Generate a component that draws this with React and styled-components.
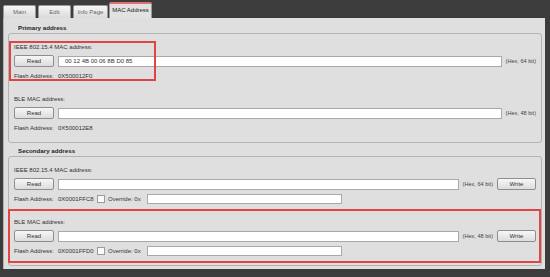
import React from "react";
import styled, { createGlobalStyle } from "styled-components";

const Global = createGlobalStyle`
  html, body { margin: 0; padding: 0; background: #3c3c3c; }
  body { font-family: "Liberation Sans", Arial, sans-serif; }
  #root { width: 550px; height: 277px; }
`;

const Page = styled.div`
  width: 550px;
  height: 277px;
  box-sizing: border-box;
  background: #3c3c3c;
  padding: 2px 5px 8px 3px;
  display: flex;
  flex-direction: column;
`;

const TabBar = styled.div`
  display: flex;
  align-items: flex-end;
  height: 16px;
  gap: 2px;
`;

const Tab = styled.div`
  box-sizing: border-box;
  width: ${(p) => p.$w}px;
  height: ${(p) => (p.$active ? 16 : 13)}px;
  margin-right: ${(p) => p.$mr || 0}px;
  display: flex;
  align-items: center;
  justify-content: center;
  font-size: 6px;
  color: ${(p) => (p.$active ? "#222" : "#666")};
  background: ${(p) =>
    p.$active
      ? "#e2e2e2"
      : "linear-gradient(#f6f6f6, #dadada)"};
  border: 1px solid #9a9a9a;
  border-bottom: none;
  border-top: ${(p) => (p.$active ? "2px solid #e07070" : "1px solid #9a9a9a")};
  border-radius: 2px 2px 0 0;
  padding-bottom: ${(p) => (p.$active ? 2 : 0)}px;
`;

const Panel = styled.div`
  flex: 1;
  background: #dfdfdf;
  border-left: 1px solid #b5b5b5;
  box-sizing: border-box;
  padding: 6px 3px 3px 4px;
  display: flex;
  flex-direction: column;
`;

const SectionTitle = styled.div`
  font-size: 6.2px;
  font-weight: bold;
  color: #222;
  line-height: 8px;
  height: 8px;
  padding-left: 10px;
  margin-top: ${(p) => p.$mt || 0}px;
  margin-bottom: 1px;
`;

const Group = styled.div`
  border: 1px solid #b3b3b3;
  border-radius: 3px;
  box-sizing: border-box;
  height: ${(p) => p.$h}px;
  padding: 9px 5px 0 5px;
  display: flex;
  flex-direction: column;
  gap: ${(p) => p.$gap}px;
`;

const Block = styled.div`
  position: relative;
  display: flex;
  flex-direction: column;
  gap: 4px;
`;

const Highlight = styled.div`
  position: absolute;
  border: 2px solid #e04444;
  box-sizing: border-box;
  pointer-events: none;
`;

const Label = styled.div`
  font-size: 6px;
  line-height: 8px;
  height: 8px;
  color: #333;
`;

const Row = styled.div`
  display: flex;
  align-items: center;
  gap: 4px;
  height: 12px;
`;

const Button = styled.button`
  box-sizing: border-box;
  width: ${(p) => p.$w || 40}px;
  height: 12px;
  padding: 0;
  font-family: inherit;
  font-size: 6px;
  color: #333;
  background: linear-gradient(#f7f7f7, #dcdcdc);
  border: 1px solid #8e8e8e;
  border-radius: 2px;
  flex-shrink: 0;
`;

const Input = styled.div`
  box-sizing: border-box;
  flex: ${(p) => (p.$w ? "none" : 1)};
  width: ${(p) => (p.$w ? `${p.$w}px` : "auto")};
  height: ${(p) => p.$h || 11}px;
  background: #fff;
  border: 1px solid #a9a9a9;
  font-size: 6px;
  line-height: ${(p) => (p.$h || 11) - 2}px;
  padding-left: 6px;
  color: #333;
  white-space: pre;
`;

const Hint = styled.span`
  font-size: 5.6px;
  color: #444;
  flex-shrink: 0;
  white-space: nowrap;
`;

const FlashRow = styled.div`
  display: flex;
  align-items: center;
  height: 10px;
  font-size: 6px;
  color: #333;
`;

const FlashLabel = styled.span`
  width: 44px;
  flex-shrink: 0;
`;

const FlashValue = styled.span`
  width: 39px;
  flex-shrink: 0;
`;

const Check = styled.span`
  box-sizing: border-box;
  width: 8px;
  height: 8px;
  background: #fafafa;
  border: 1px solid #9c9c9c;
  margin-right: 3px;
`;

const OverrideText = styled.span`
  width: 39px;
  flex-shrink: 0;
`;

function AddressBlock({ label, value, hint, write, flash, override, highlight }) {
  return (
    <Block>
      {highlight && <Highlight style={highlight} />}
      <Label>{label}</Label>
      <Row>
        <Button>Read</Button>
        <Input>{value}</Input>
        <Hint>{hint}</Hint>
        {write && <Button $w={39}>Write</Button>}
      </Row>
      <FlashRow>
        <FlashLabel>Flash Address:</FlashLabel>
        <FlashValue>{flash}</FlashValue>
        {override && (
          <>
            <Check />
            <OverrideText>Override: 0x</OverrideText>
            <Input $w={195} $h={10} />
          </>
        )}
      </FlashRow>
    </Block>
  );
}

export default function App() {
  return (
    <>
      <Global />
      <Page>
        <TabBar>
          <Tab $w={33}>Main</Tab>
          <Tab $w={33}>Edit</Tab>
          <Tab $w={35} $mr={-1}>Info Page</Tab>
          <Tab $w={43} $active>MAC Address</Tab>
        </TabBar>
        <Panel>
          <SectionTitle>Primary address</SectionTitle>
          <Group $h={110} $gap={14}>
            <AddressBlock
              label="IEEE 802.15.4 MAC address:"
              value="00 12 4B 00 06 8B D0 85"
              hint="(Hex, 64 bit)"
              flash="0X500012F0"
              highlight={{ left: -5, top: -2, width: 147, height: 40 }}
            />
            <AddressBlock
              label="BLE MAC address:"
              value=""
              hint="(Hex, 48 bit)"
              flash="0X500012E8"
            />
          </Group>
          <SectionTitle $mt={4}>Secondary address</SectionTitle>
          <Group $h={110} $gap={14}>
            <AddressBlock
              label="IEEE 802.15.4 MAC address:"
              value=""
              hint="(Hex, 64 bit)"
              write
              flash="0X0001FFC8"
              override
            />
            <AddressBlock
              label="BLE MAC address:"
              value=""
              hint="(Hex, 48 bit)"
              write
              flash="0X0001FFD0"
              override
              highlight={{ left: -6, right: -5, top: -9, bottom: -7 }}
            />
          </Group>
        </Panel>
      </Page>
    </>
  );
}
